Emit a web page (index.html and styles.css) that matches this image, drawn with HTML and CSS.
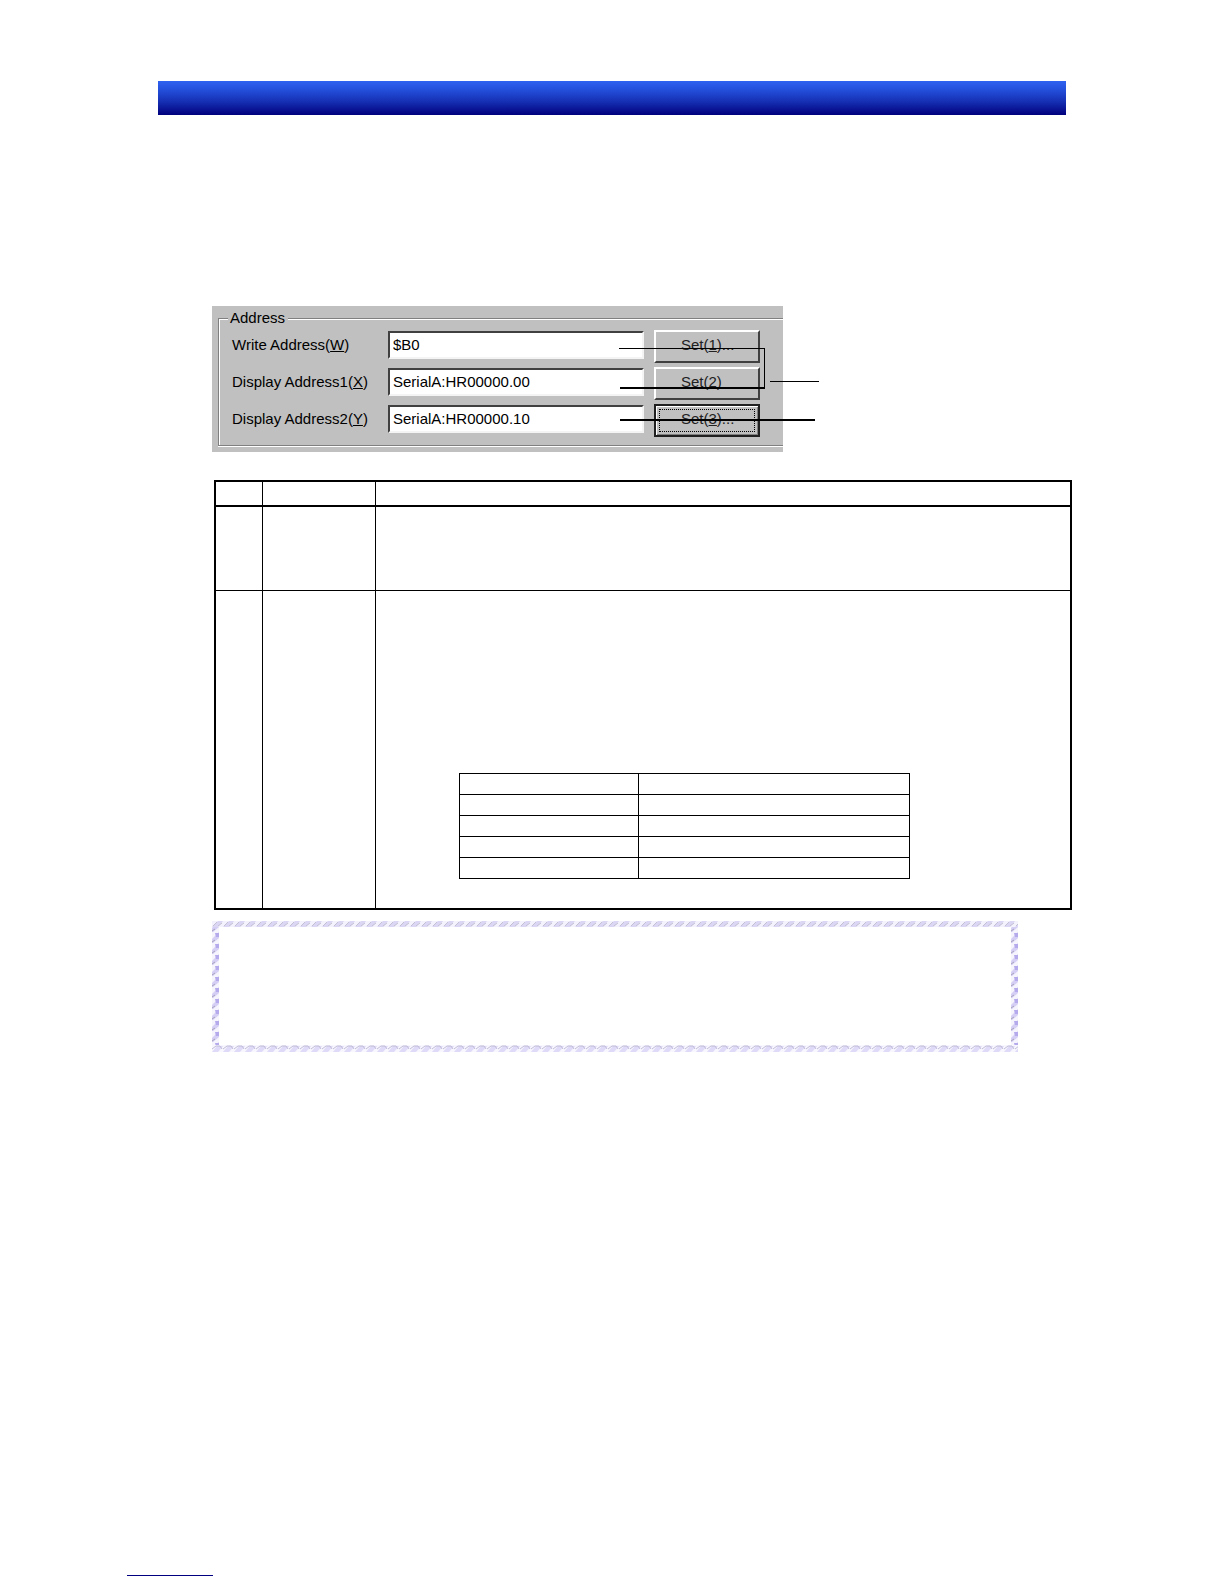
FILE: index.html
```
<!DOCTYPE html>
<html lang="en">
<head>
  <meta charset="UTF-8">
  <meta name="viewport" content="width=device-width, initial-scale=1">
  <link rel="stylesheet" href="styles.css">
</head>
<body>
  <header class="banner"></header>

  <main class="content">
    <div class="figure">
      <form class="dialog">
        <fieldset class="group">
          <legend>Address</legend>
          <div class="row">
            <label for="write">Write Address(<u>W</u>)</label>
            <input type="text" id="write" value="$B0">
            <button type="button">Set(<u>1</u>)...</button>
          </div>
          <div class="row">
            <label for="display1">Display Address1(<u>X</u>)</label>
            <input type="text" id="display1" value="SerialA:HR00000.00">
            <button type="button">Set(<u>2</u>)</button>
          </div>
          <div class="row">
            <label for="display2">Display Address2(<u>Y</u>)</label>
            <input type="text" id="display2" value="SerialA:HR00000.10">
            <button type="button" class="focused">Set(<u>3</u>)...</button>
          </div>
        </fieldset>
      </form>
      <!-- leader lines over the dialog -->
      <svg class="leaders" width="608" height="146" viewBox="0 0 608 146" aria-hidden="true">
        <path d="M407 42h146v40h-1v-39h-145zM408 81h145v2h-145zM558 75h49v1h-49zM408 113h195v2h-195z"/>
      </svg>
    </div>

    <table class="items">
      <colgroup><col class="no"><col class="name"><col></colgroup>
      <thead>
        <tr><th></th><th></th><th></th></tr>
      </thead>
      <tbody>
        <tr class="first"><td></td><td></td><td></td></tr>
        <tr class="second">
          <td></td>
          <td></td>
          <td>
            <table class="inner">
              <colgroup><col class="key"><col></colgroup>
              <tr><td></td><td></td></tr>
              <tr><td></td><td></td></tr>
              <tr><td></td><td></td></tr>
              <tr><td></td><td></td></tr>
              <tr><td></td><td></td></tr>
            </table>
          </td>
        </tr>
      </tbody>
    </table>

    <div class="note"></div>
  </main>

  <footer class="footer"></footer>
</body>
</html>
```

FILE: styles.css
```
* {
  box-sizing: border-box;
}

body {
  margin: 0;
  min-height: 100vh;
  padding: 81px 158px 8px;
  display: flex;
  flex-direction: column;
  background: #fff;
  color: #000;
  font-family: "Liberation Sans", Arial, sans-serif;
  font-size: 15px;
}

.banner {
  height: 34px;
  background: linear-gradient(#2f62f0, #2450dc 25%, #1630b4 60%, #00007c);
}

.content {
  margin: 191px 0 0 54px;
}

/* Dialog */
.figure {
  position: relative;
}

.dialog {
  max-width: 571px;
  padding: 4px 0 6px 6px;
  background: #c0c0c0;
}

.group {
  margin: 0;
  min-width: 0;
  padding: 4px 23px 8px 13px;
  border: 1px solid #808080;
  border-right: 0;
  box-shadow: inset 1px 1px #fff, 0 1px #fff;
  display: flex;
  flex-direction: column;
  gap: 4px;
}

.group legend {
  margin-left: -4px;
  padding: 0 3px 0 2px;
  line-height: 16px;
  background: #c0c0c0;
}

.row {
  display: grid;
  grid-template-columns: 156px minmax(0, 1fr) 106px;
  align-items: center;
}

.row label {
  padding-bottom: 4px;
}

.row input {
  height: 28px;
  margin: 0 10px 4px 0;
  padding: 0 3px;
  border: 2px solid;
  border-color: #404040 #f4f4f4 #f4f4f4 #404040;
  background: #fff;
  color: #000;
  font: inherit;
}

.row button {
  height: 33px;
  padding: 0 0 4px 25px;
  border: 2px solid;
  border-color: #fff #404040 #404040 #fff;
  background: #c0c0c0;
  color: #222;
  font: inherit;
  text-align: left;
}

.row .focused {
  border-color: #202020;
  box-shadow: inset 1px 1px #fff, inset -1px -1px #808080;
  outline: 1px dotted #000;
  outline-offset: -6px;
}

.leaders {
  position: absolute;
  top: 0;
  left: 0;
}

/* Tables */
table {
  border-collapse: collapse;
  table-layout: fixed;
}

th,
td {
  padding: 0;
  border: 1px solid #000;
}

.items {
  width: calc(100% + 4px);
  margin: 28px 0 0 2px;
  border: 2px solid #000;
}

.items thead {
  border-bottom: 2px solid #000;
}

.no {
  width: 47px;
}

.name {
  width: 113px;
}

.items thead tr {
  height: 25px;
}

.first {
  height: 84px;
}

.second {
  height: 319px;
}

.second > td {
  vertical-align: bottom;
}

.inner {
  width: 65%;
  margin: 0 0 29px 83px;
}

.inner tr {
  height: 21px;
}

.key {
  width: 179px;
}

/* Note box with a rope pattern frame */
.note {
  height: 131px;
  margin: 11px 48px 0 0;
  background:
    url("data:image/svg+xml,%3Csvg xmlns='http://www.w3.org/2000/svg' width='11' height='6'%3E%3Crect width='11' height='6' fill='%23f4f2fc'/%3E%3Cpath d='M0 6L6 0h5L6 6z' fill='%23dad6f3'/%3E%3Cpath d='M1 5l4-4M6 5l4-3' stroke='%23c4c0d4'/%3E%3C/svg%3E") top left / 11px 6px repeat-x,
    url("data:image/svg+xml,%3Csvg xmlns='http://www.w3.org/2000/svg' width='11' height='7'%3E%3Crect width='11' height='7' fill='%23f8f6fe'/%3E%3Cpath d='M0 7L5 1h6L6 7z' fill='%23dfdaf7'/%3E%3Cpath d='M0 4l4-3h4l2 3' fill='none' stroke='%23c0bcd8'/%3E%3C/svg%3E") bottom left / 11px 7px repeat-x,
    url("data:image/svg+xml,%3Csvg xmlns='http://www.w3.org/2000/svg' width='7' height='11'%3E%3Crect width='7' height='11' fill='%23f6f4fd'/%3E%3Cpath d='M0 7L7 0v6L1 11H0z' fill='%23d5cef5'/%3E%3Cpath d='M3 1h4v4H4z' fill='%23b4aaec'/%3E%3Cpath d='M0 10l3-2' stroke='%23a8a4bc'/%3E%3C/svg%3E") top left / 7px 11px repeat-y,
    url("data:image/svg+xml,%3Csvg xmlns='http://www.w3.org/2000/svg' width='7' height='11'%3E%3Crect width='7' height='11' fill='%23f6f4fd'/%3E%3Cpath d='M0 7L7 0v6L1 11H0z' fill='%23d5cef5'/%3E%3Cpath d='M3 1h4v4H4z' fill='%23b4aaec'/%3E%3Cpath d='M0 10l3-2' stroke='%23a8a4bc'/%3E%3C/svg%3E") top right / 7px 11px repeat-y;
}

.footer {
  width: 86px;
  margin: auto 0 0 -31px;
  border-bottom: 1px solid #000080;
}
```
